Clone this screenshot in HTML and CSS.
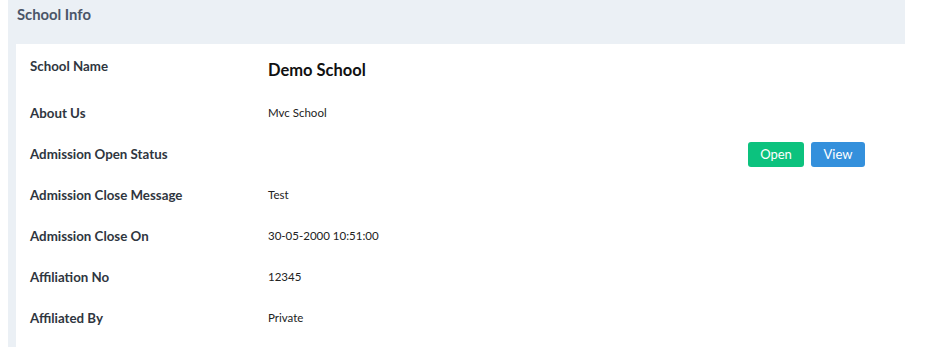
FILE: index.html
```html
<!DOCTYPE html>
<html>
<head>
<meta charset="utf-8">
<link rel="stylesheet" href="styles.css">
</head>
<body>
<section class="panel">
  <header class="panel-head">School Info</header>
  <div class="card">
    <div class="row row-title">
      <div class="label">School Name</div>
      <div class="value title">Demo School</div>
    </div>
    <div class="row">
      <div class="label">About Us</div>
      <div class="value">Mvc School</div>
    </div>
    <div class="row">
      <div class="label">Admission Open Status</div>
      <div class="value"></div>
      <div class="actions">
        <button class="btn btn-green">Open</button>
        <button class="btn btn-blue">View</button>
      </div>
    </div>
    <div class="row">
      <div class="label">Admission Close Message</div>
      <div class="value">Test</div>
    </div>
    <div class="row">
      <div class="label">Admission Close On</div>
      <div class="value">30-05-2000 10:51:00</div>
    </div>
    <div class="row">
      <div class="label">Affiliation No</div>
      <div class="value">12345</div>
    </div>
    <div class="row">
      <div class="label">Affiliated By</div>
      <div class="value">Private</div>
    </div>
  </div>
</section>
</body>
</html>
```
FILE: styles.css
```css
html, body {
  margin: 0;
  padding: 0;
  background: #ffffff;
}
body {
  padding: 0 8px;
  font-family: "Lato", "Noto Sans", sans-serif;
}
.panel {
  width: 897px;
  height: 347px;
  background: #ebf0f5;
  padding-left: 8px;
  box-sizing: border-box;
}
.panel-head {
  height: 44px;
  line-height: 28px;
  margin-left: -8px;
  padding-left: 9px;
  font-size: 14.8px;
  font-weight: 700;
  color: #4a5568;
  box-sizing: border-box;
}
.card {
  background: #ffffff;
  height: 303px;
  padding: 12px 40px 0 14px;
  box-sizing: border-box;
  display: flex;
  flex-direction: column;
  gap: 21px;
}
.row {
  display: flex;
  align-items: center;
  min-height: 20px;
}
.row-title {
  align-items: flex-start;
  margin-bottom: -2px;
}
.label {
  width: 238px;
  flex: none;
  font-size: 13.3px;
  line-height: 20px;
  font-weight: 700;
  color: #2f3640;
}
.value {
  flex: 1;
  font-size: 11.5px;
  line-height: 20px;
  color: #222;
}
.value.title {
  font-size: 16.5px;
  line-height: 28px;
  font-weight: 700;
  color: #111;
}
.actions {
  display: flex;
  gap: 7px;
  margin: -3px 0;
}
.btn {
  height: 25px;
  width: 56px;
  border: none;
  border-radius: 3px;
  color: #fff;
  font-family: inherit;
  font-size: 13px;
  padding: 0;
}
.btn-blue {
  width: 54px;
  background: #3490dc;
}
.btn-green {
  background: #0cc27e;
}
```
